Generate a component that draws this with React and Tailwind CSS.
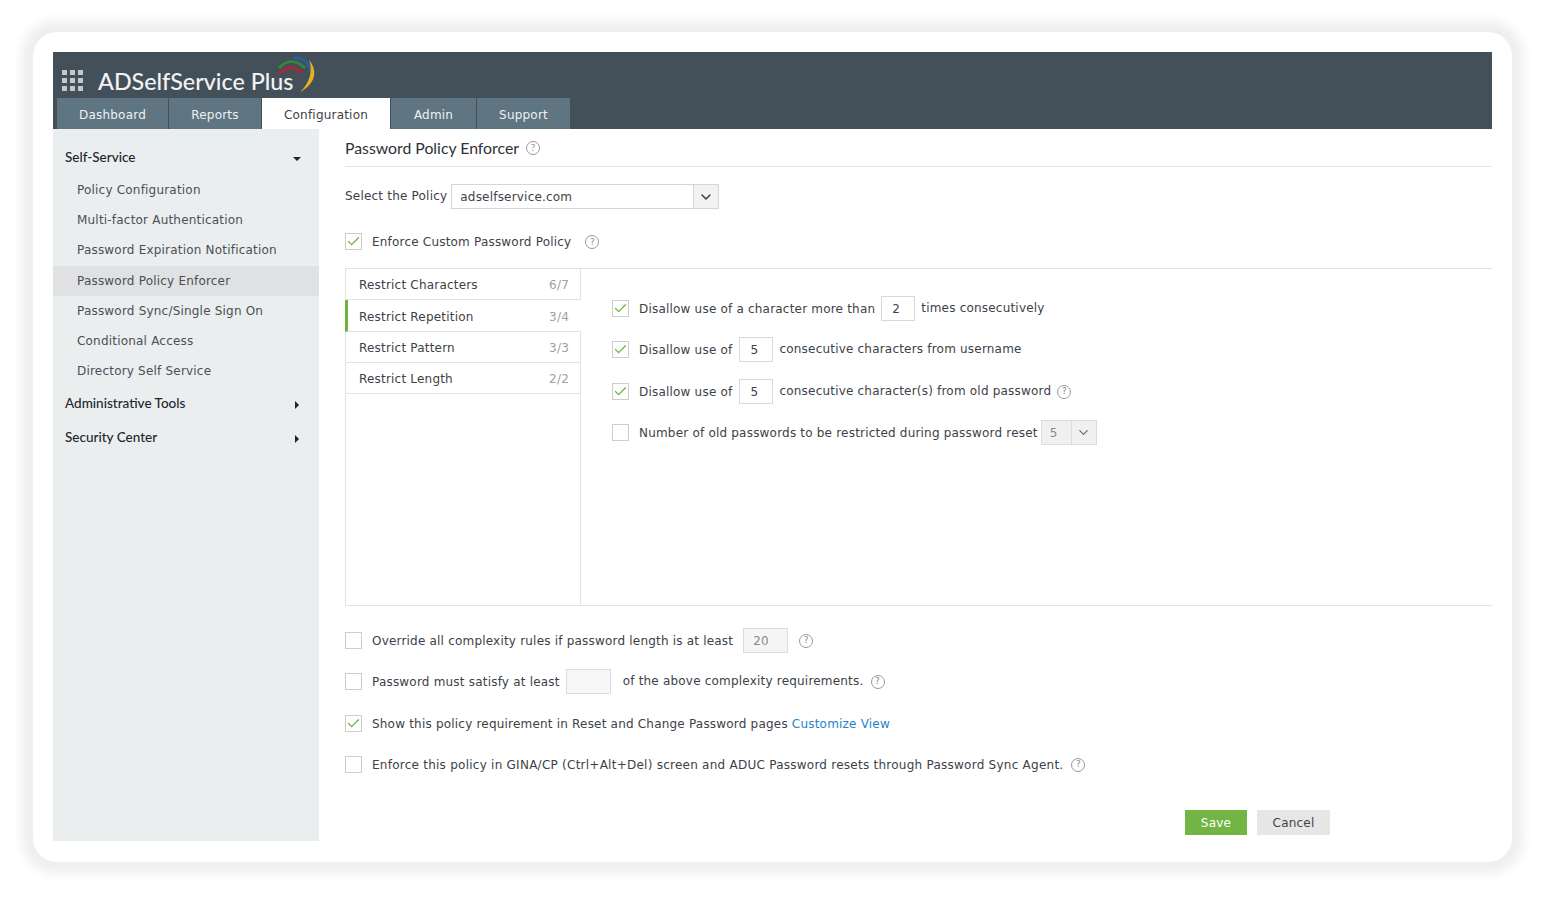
import React from 'react';
import { Check, ChevronDown } from 'lucide-react';

const tabs = [
    { label: 'Dashboard', w: 'w-[111px]' },
    { label: 'Reports', w: 'w-[92px]' },
    { label: 'Configuration', w: 'w-[128px]', active: true },
    { label: 'Admin', w: 'w-[85px]' },
    { label: 'Support', w: 'w-[93px]' },
];

const sideItems = [
    'Policy Configuration',
    'Multi-factor Authentication',
    'Password Expiration Notification',
    'Password Policy Enforcer',
    'Password Sync/Single Sign On',
    'Conditional Access',
    'Directory Self Service',
];

const restrictions = [
    { label: 'Restrict Characters', count: '6/7' },
    { label: 'Restrict Repetition', count: '3/4', active: true },
    { label: 'Restrict Pattern', count: '3/3' },
    { label: 'Restrict Length', count: '2/2' },
];

const Checkbox = ({ checked }) => (
    <span className="-mt-px flex h-[17px] w-[17px] shrink-0 items-center justify-center border-[1.5px] border-[#cdcdcd] bg-white">
        {checked && <Check size={15} strokeWidth={2} className="text-[#6db33f]" />}
    </span>
);

const Help = ({ className = '' }) => (
    <span className={`flex h-[14px] w-[14px] shrink-0 items-center justify-center rounded-full border border-[#9a9a9a] text-[9px] leading-none tracking-normal text-[#8a8a8a] ${className}`}>?</span>
);

const NumBox = ({ value, className = '' }) => (
    <span className={`flex h-[25px] w-[34px] shrink-0 items-center border border-[#d9d9d9] bg-white pl-[10px] ${className}`}>{value}</span>
);

const App = () => {
    return (
        <div className="h-[897px] w-[1546px] overflow-hidden bg-white pl-[33px] pt-[32px] font-['DejaVu_Sans',sans-serif] text-[12px] tracking-[0.2px] text-[#3d4148]">
            <div className="h-[830px] w-[1479px] rounded-[24px] bg-white p-5 shadow-[0_0_6px_9px_#efefef,0_0_6px_16px_#f9f9f9]">
                <header className="h-[77px] bg-[#445059]">
                    <div className="flex h-[46px] items-center pl-[9px]">
                        <div className="mt-[11px] grid grid-cols-3 gap-[3px]">
                            {Array.from({ length: 9 }).map((_, i) => (
                                <span key={i} className="h-[5px] w-[5px] bg-[#c4c8cb]" />
                            ))}
                        </div>
                        <span className="ml-[15px] mt-[14px] font-['Lato',sans-serif] text-[23.3px] font-medium leading-none tracking-normal text-[#f2f3f4]">ADSelfService Plus</span>
                        <svg width="40" height="40" viewBox="0 0 40 40" className="-ml-[15px] mt-[2px]">
                            <path d="M1 12 Q13 -1 27 12" fill="none" stroke="#2f8a3f" strokeWidth="2.6" />
                            <path d="M1 18 Q12 6 24 17" fill="none" stroke="#b5252b" strokeWidth="2.6" />
                            <path d="M15 2 Q29 0 33 16" fill="none" stroke="#2a5ea8" strokeWidth="2.6" />
                            <path d="M31 4 C40 14 38 28 22 36 C32 27 35 14 31 4 Z" fill="#e3b21c" />
                        </svg>
                    </div>
                    <nav className="flex h-[31px] pl-1">
                        {tabs.map((t) => (
                            <div
                                key={t.label}
                                className={`mr-px flex items-center justify-center pt-[2px] ${t.w} ${t.active ? 'bg-white text-[#3d4148]' : 'bg-[#607582] text-[#eef1f3]'}`}
                            >
                                {t.label}
                            </div>
                        ))}
                    </nav>
                </header>

                <div className="flex h-[712px]">
                    <aside className="w-[266px] shrink-0 bg-[#ebeeef] pt-[17px]">
                        <div className="flex h-[22px] items-center justify-between pl-3 pr-[18px] font-['Lato',sans-serif] text-[13.5px] font-medium tracking-normal text-[#22262b]">
                            Self-Service
                            <span className="mt-[3px] h-0 w-0 border-x-[4px] border-t-[4px] border-x-transparent border-t-[#222]" />
                        </div>
                        <ul className="mt-[7px]">
                            {sideItems.map((s) => (
                                <li
                                    key={s}
                                    className={`flex h-[30.2px] items-center pl-6 text-[#4a4f57] ${s === 'Password Policy Enforcer' ? 'bg-[#e0e1e3]' : ''}`}
                                >
                                    {s}
                                </li>
                            ))}
                        </ul>
                        <div className="mt-[6px] flex h-[22px] items-center justify-between pl-3 pr-[20px] font-['Lato',sans-serif] text-[13.5px] font-medium tracking-normal text-[#22262b]">
                            Administrative Tools
                            <span className="mt-[3px] h-0 w-0 border-y-[4px] border-l-[4px] border-y-transparent border-l-[#222]" />
                        </div>
                        <div className="mt-[12px] flex h-[22px] items-center justify-between pl-3 pr-[20px] font-['Lato',sans-serif] text-[13.5px] font-medium tracking-normal text-[#22262b]">
                            Security Center
                            <span className="mt-[3px] h-0 w-0 border-y-[4px] border-l-[4px] border-y-transparent border-l-[#222]" />
                        </div>
                    </aside>

                    <main className="min-w-0 flex-1 pl-[26px]">
                        <div className="flex h-[38px] items-center gap-[7px] border-b border-[#e6e6e6] font-['Lato',sans-serif] text-[15.8px] tracking-normal text-[#2d3136]">
                            Password Policy Enforcer
                            <Help />
                        </div>

                        <div className="mt-[17px] flex h-[25px] items-center gap-[4px]">
                            <span className="-mt-[2px]">Select the Policy</span>
                            <div className="flex h-[25px] w-[268px] border border-[#d6d6d6]">
                                <span className="flex flex-1 items-center pl-2">adselfservice.com</span>
                                <span className="flex w-[25px] items-center justify-center border-l border-[#d6d6d6] bg-[#f2f2f2]">
                                    <ChevronDown size={16} strokeWidth={2} className="text-[#333]" />
                                </span>
                            </div>
                        </div>

                        <div className="mt-[23px] flex h-[20px] items-center">
                            <Checkbox checked />
                            <span className="ml-[10px]">Enforce Custom Password Policy</span>
                            <Help className="ml-[14px]" />
                        </div>

                        <div className="mt-[16px] flex h-[338px] border-y border-[#e3e3e3]">
                            <div className="w-[236px] shrink-0 border-x border-[#e3e3e3]">
                                {restrictions.map((r) => (
                                    <div
                                        key={r.label}
                                        className={`flex items-center justify-between border-b border-[#e3e3e3] pt-[2px] ${r.active ? '-mx-px h-[32px] border-l-[3px] border-l-[#6db33f] bg-white pl-[11px] pr-[12px]' : 'h-[31px] pl-[13px] pr-[11px]'}`}
                                    >
                                        <span>{r.label}</span>
                                        <span className="text-[#a0a0a0]">{r.count}</span>
                                    </div>
                                ))}
                            </div>
                            <div className="flex-1 pl-[31px] pt-[27px]">
                                <div className="flex h-[25px] items-center">
                                    <Checkbox checked />
                                    <span className="ml-[10px]">Disallow use of a character more than</span>
                                    <NumBox value="2" className="ml-[6px]" />
                                    <span className="ml-[6px] -mt-[2px]">times consecutively</span>
                                </div>
                                <div className="mt-[16px] flex h-[25px] items-center">
                                    <Checkbox checked />
                                    <span className="ml-[10px]">Disallow use of</span>
                                    <NumBox value="5" className="ml-[7px]" />
                                    <span className="ml-[6px] -mt-[2px]">consecutive characters from username</span>
                                </div>
                                <div className="mt-[17px] flex h-[25px] items-center">
                                    <Checkbox checked />
                                    <span className="ml-[10px]">Disallow use of</span>
                                    <NumBox value="5" className="ml-[7px]" />
                                    <span className="ml-[6px] -mt-[2px]">consecutive character(s) from old password</span>
                                    <Help className="ml-[6px]" />
                                </div>
                                <div className="mt-[16px] flex h-[25px] items-center">
                                    <Checkbox />
                                    <span className="ml-[10px]">Number of old passwords to be restricted during password reset</span>
                                    <div className="ml-[3px] flex h-[25px] w-[56px] border border-[#dcdcdc] bg-[#f0f0f0] text-[#8a8a8a]">
                                        <span className="flex w-[30px] items-center border-r border-[#dcdcdc] pl-[8px]">5</span>
                                        <span className="flex flex-1 items-center justify-center">
                                            <ChevronDown size={15} strokeWidth={1.8} className="text-[#666]" />
                                        </span>
                                    </div>
                                </div>
                            </div>
                        </div>

                        <div className="mt-[22px] flex h-[25px] items-center">
                            <Checkbox />
                            <span className="ml-[10px]">Override all complexity rules if password length is at least</span>
                            <span className="ml-[10px] flex h-[25px] w-[45px] items-center border border-[#dcdcdc] bg-[#f5f5f5] pl-[9px] text-[#8a8a8a]">20</span>
                            <Help className="ml-[11px]" />
                        </div>
                        <div className="mt-[16px] flex h-[25px] items-center">
                            <Checkbox />
                            <span className="ml-[10px]">Password must satisfy at least</span>
                            <span className="ml-[6px] h-[25px] w-[45px] border border-[#dcdcdc] bg-[#f7f7f7]" />
                            <span className="ml-[12px] -mt-[2px]">of the above complexity requirements.</span>
                            <Help className="ml-[7px]" />
                        </div>
                        <div className="mt-[17px] flex h-[25px] items-center">
                            <Checkbox checked />
                            <span className="ml-[10px]">Show this policy requirement in Reset and Change Password pages</span>
                            <a href="#" className="ml-[4px] text-[#2a83c6]">Customize View</a>
                        </div>
                        <div className="mt-[16px] flex h-[25px] items-center">
                            <Checkbox />
                            <span className="ml-[10px] tracking-[0.25px]">Enforce this policy in GINA/CP (Ctrl+Alt+Del) screen and ADUC Password resets through Password Sync Agent.</span>
                            <Help className="ml-[8px]" />
                        </div>

                        <div className="mt-[33px] flex gap-[10px] pl-[840px]">
                            <button className="h-[25px] w-[62px] bg-[#72b544] text-white">Save</button>
                            <button className="h-[25px] w-[73px] bg-[#e6e6e6] text-[#444]">Cancel</button>
                        </div>
                    </main>
                </div>
            </div>
        </div>
    );
};

export default App;
